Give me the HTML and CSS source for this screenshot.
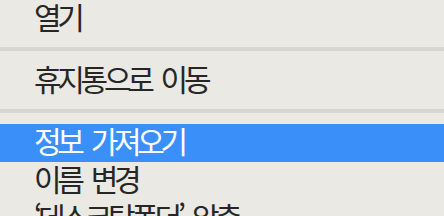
FILE: index.html
```html
<!DOCTYPE html>
<html lang="ko">
<head>
<meta charset="utf-8">
<link rel="stylesheet" href="styles.css">
</head>
<body>
<div class="menu">
  <div class="item">열기</div>
  <div class="sep"></div>
  <div class="item">휴지통으로 이동</div>
  <div class="sep"></div>
  <div class="item active">정보 가져오기</div>
  <div class="item">이름 변경</div>
  <div class="item">‘데스크탑폴더’ 압축</div>
</div>
</body>
</html>
```
FILE: styles.css
```css
html, body {
  margin: 0;
  padding: 0;
  background: #eae9e4;
  overflow: hidden;
}
.menu {
  display: flex;
  flex-direction: column;
  width: 444px;
  height: 216px;
  overflow: hidden;
  background: #eae9e4;
  font-family: "Noto Sans CJK KR", "Noto Sans", sans-serif;
  font-size: 30px;
  letter-spacing: -4.3px;
  word-spacing: 6px;
  color: #262626;
}
.item {
  flex: none;
  height: 38px;
  line-height: 32px;
  padding: 0 0 6px 34px;
  box-sizing: border-box;
  white-space: nowrap;
}
.item.active {
  background: #3a8ff8;
  color: #ffffff;
}
.sep {
  flex: none;
  height: 24px;
  box-sizing: border-box;
  padding-top: 9px;
}
.sep::before {
  content: "";
  display: block;
  height: 4px;
  background: #d7d6d1;
}
```
